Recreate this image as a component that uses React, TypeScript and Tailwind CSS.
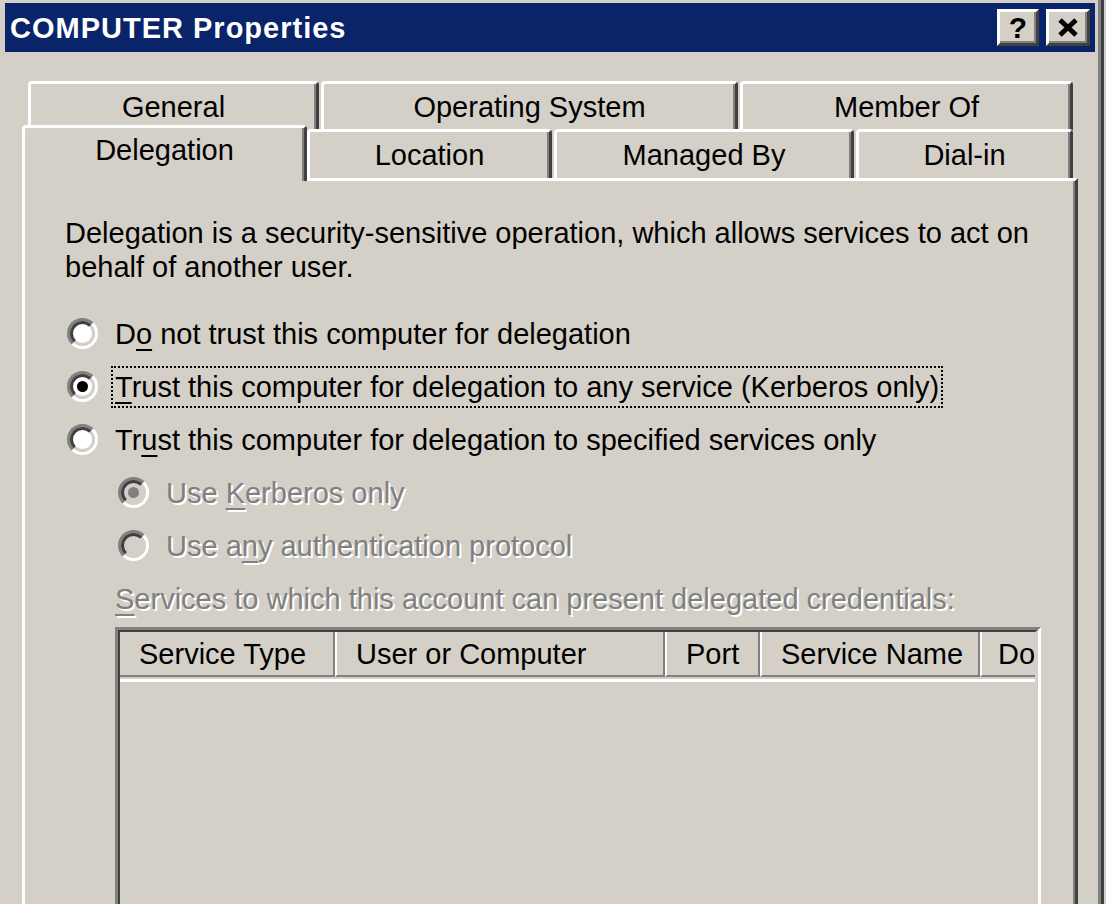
import type { ReactNode } from 'react';

const BG = 'bg-[#D4D0C8]';

function Radio({ checked = false, disabled = false }: { checked?: boolean; disabled?: boolean }) {
  return (
    <span className="w-[31px] h-[31px] shrink-0 rounded-full border-[3px] border-t-[#808080] border-l-[#808080] border-r-white border-b-white flex">
      <span
        className={`flex-1 rounded-full border-[3px] border-t-[#404040] border-l-[#404040] border-r-[#D4D0C8] border-b-[#D4D0C8] flex items-center justify-center ${
          disabled ? 'bg-[#D4D0C8]' : 'bg-white'
        }`}
      >
        {checked && (
          <span className={`w-[11px] h-[11px] rounded-full ${disabled ? 'bg-[#808080]' : 'bg-black'}`} />
        )}
      </span>
    </span>
  );
}

function RadioRow({
  children,
  checked,
  disabled,
  focused,
  indent,
}: {
  children: ReactNode;
  checked?: boolean;
  disabled?: boolean;
  focused?: boolean;
  indent?: boolean;
}) {
  return (
    <div className={`h-[53px] flex items-center ${indent ? 'ml-[53px]' : 'ml-[2px]'}`}>
      <Radio checked={checked} disabled={disabled} />
      <span
        className={`ml-[13px] px-[2px] py-[2px] border-2 whitespace-nowrap ${
          focused ? 'border-dotted border-black' : 'border-transparent'
        } ${disabled ? 'text-[#808080] [text-shadow:2px_2px_0_#fff]' : ''}`}
      >
        {children}
      </span>
    </div>
  );
}

function U({ children, disabled }: { children: ReactNode; disabled?: boolean }) {
  return (
    <span
      className={`underline decoration-[2px] underline-offset-[5px] ${
        disabled ? 'decoration-[#808080]' : 'decoration-black'
      }`}
    >
      {children}
    </span>
  );
}

function Tab({ label, width, selected }: { label: string; width: string; selected?: boolean }) {
  return (
    <div
      className={`${width} ${BG} flex items-start justify-center rounded-t-[4px] border-t-[3px] border-l-[3px] border-t-white border-l-white border-r-[3px] border-r-[#404040] shadow-[inset_-2px_0_0_#808080] ${
        selected ? 'h-[56px] -mb-[3px] relative z-10 pt-[5px]' : 'h-[49px] pt-[6px]'
      }`}
    >
      {label}
    </div>
  );
}

function HeaderCell({ label, width, first, pad = 'pl-[19px]' }: { label: string; width: string; first?: boolean; pad?: string }) {
  return (
    <div
      className={`${width} shrink-0 h-full flex items-center whitespace-nowrap border-r-2 border-r-[#808080] border-b-2 border-b-[#808080] ${pad} ${
        first ? '' : 'border-l-2 border-l-white'
      }`}
    >
      {label}
    </div>
  );
}

export default function App() {
  return (
    <div
      className={`w-[1106px] h-[904px] overflow-hidden ${BG} text-black text-[29px] leading-[34px] font-['Liberation_Sans',Arial,sans-serif]`}
    >
      <div className="w-[1104px] h-full pt-[3px] pl-[5px] flex flex-col border-r-[3px] border-r-[#404040] shadow-[inset_-3px_0_0_#808080]">
        {/* title bar */}
        <div className="w-[1090px] h-[49px] shrink-0 bg-[#0A246A] flex items-center justify-between pl-[5px] pr-[5px]">
          <span className="text-white font-bold tracking-[1px]">COMPUTER Properties</span>
          <div className="flex gap-[7px]">
            <div className="w-[42px] h-[37px] border-t-[3px] border-l-[3px] border-t-white border-l-white border-r-[3px] border-b-[3px] border-r-[#404040] border-b-[#404040] shadow-[inset_-2px_-2px_0_#808080] bg-[#D4D0C8] flex items-center justify-center font-bold text-[30px] leading-none">
              ?
            </div>
            <div className="w-[44px] h-[37px] border-t-[3px] border-l-[3px] border-t-white border-l-white border-r-[3px] border-b-[3px] border-r-[#404040] border-b-[#404040] shadow-[inset_-2px_-2px_0_#808080] bg-[#D4D0C8] flex items-center justify-center">
              <svg width="22" height="19" viewBox="0 0 22 19">
                <path d="M3 2 L19 17 M19 2 L3 17" stroke="#000" strokeWidth="5" />
              </svg>
            </div>
          </div>
        </div>

        {/* tabs, back row */}
        <div className="mt-[29px] ml-[23px] flex gap-[2px] shrink-0">
          <Tab label="General" width="w-[291px]" />
          <Tab label="Operating System" width="w-[417px]" />
          <Tab label="Member Of" width="w-[333px]" />
        </div>

        {/* tabs, front row */}
        <div className="ml-[17px] h-[48px] flex items-end shrink-0">
          <Tab label="Delegation" width="w-[285px]" selected />
          <Tab label="Location" width="w-[245px]" />
          <div className="w-[2px]" />
          <Tab label="Managed By" width="w-[300px]" />
          <div className="w-[2px]" />
          <Tab label="Dial-in" width="w-[217px]" />
        </div>

        {/* tab page */}
        <div className="ml-[17px] w-[1056px] flex-1 border-t-[3px] border-l-[3px] border-t-white border-l-white border-r-[3px] border-r-[#404040] shadow-[inset_-2px_0_0_#808080] pl-[40px] pt-[35px] flex flex-col">
          <p className="whitespace-nowrap">
            Delegation is a security-sensitive operation, which allows services to act on
            <br />
            behalf of another user.
          </p>

          <div className="mt-[23px]">
            <RadioRow>
              D<U>o</U> not trust this computer for delegation
            </RadioRow>
            <RadioRow checked focused>
              <U>T</U>rust this computer for delegation to any service (Kerberos only)
            </RadioRow>
            <RadioRow>
              Tr<U>u</U>st this computer for delegation to specified services only
            </RadioRow>
            <RadioRow checked disabled indent>
              Use <U disabled>K</U>erberos only
            </RadioRow>
            <RadioRow disabled indent>
              Use a<U disabled>n</U>y authentication protocol
            </RadioRow>
            <div className="h-[53px] flex items-center ml-[50px] whitespace-nowrap text-[#808080] [text-shadow:2px_2px_0_#fff]">
              <span>
                <U disabled>S</U>ervices to which this account can present delegated credentials:
              </span>
            </div>
          </div>

          {/* services list */}
          <div className="mt-[2px] ml-[50px] w-[926px] flex-1 border-t-[3px] border-l-[3px] border-t-[#808080] border-l-[#808080] border-r-[3px] border-r-white flex">
            <div className="flex-1 border-t-2 border-l-2 border-t-[#404040] border-l-[#404040] border-r-[3px] border-r-[#D4D0C8] overflow-hidden">
              <div className="h-[45px] flex">
                <HeaderCell label="Service Type" width="w-[215px]" first />
                <HeaderCell label="User or Computer" width="w-[330px]" />
                <HeaderCell label="Port" width="w-[95px]" />
                <HeaderCell label="Service Name" width="w-[220px]" />
                <HeaderCell label="Do" width="w-[200px]" pad="pl-[16px]" />
              </div>
              <div className="mt-[2px] h-[3px] bg-white" />
            </div>
          </div>
        </div>
      </div>
    </div>
  );
}
